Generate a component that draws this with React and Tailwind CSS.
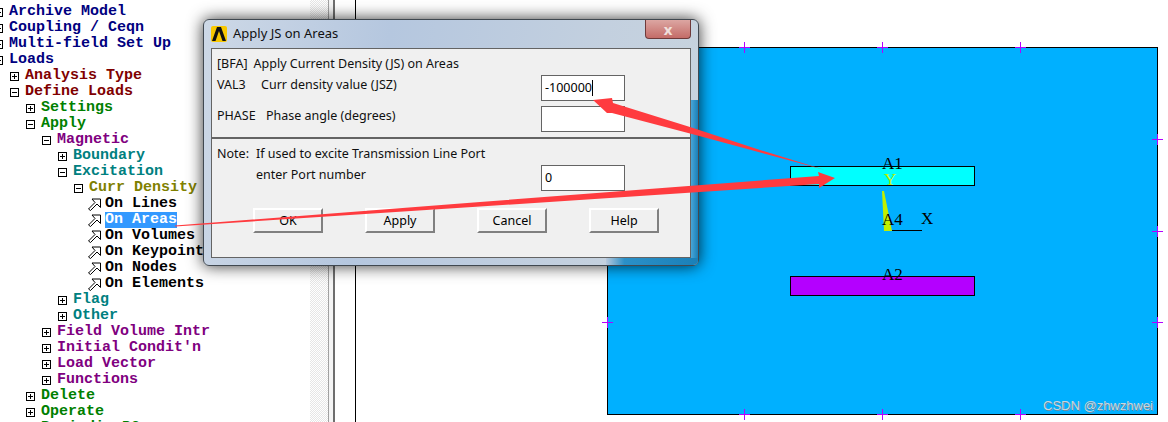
// App.jsx
import React from 'react';

const treeRows = [
  { level: 0, box: 'plus', label: 'Archive Model', color: 'text-[#000080]' },
  { level: 0, box: 'plus', label: 'Coupling / Ceqn', color: 'text-[#000080]' },
  { level: 0, box: 'plus', label: 'Multi-field Set Up', color: 'text-[#000080]' },
  { level: 0, box: 'minus', label: 'Loads', color: 'text-[#000080]' },
  { level: 1, box: 'plus', label: 'Analysis Type', color: 'text-[#800000]' },
  { level: 1, box: 'minus', label: 'Define Loads', color: 'text-[#800000]' },
  { level: 2, box: 'plus', label: 'Settings', color: 'text-[#008000]' },
  { level: 2, box: 'minus', label: 'Apply', color: 'text-[#008000]' },
  { level: 3, box: 'minus', label: 'Magnetic', color: 'text-[#800080]' },
  { level: 4, box: 'plus', label: 'Boundary', color: 'text-[#008080]' },
  { level: 4, box: 'minus', label: 'Excitation', color: 'text-[#008080]' },
  { level: 5, box: 'minus', label: 'Curr Density', color: 'text-[#808000]' },
  { level: 6, box: 'arrow', label: 'On Lines', color: 'text-black' },
  { level: 6, box: 'arrow', label: 'On Areas', color: 'text-white', selected: true },
  { level: 6, box: 'arrow', label: 'On Volumes', color: 'text-black' },
  { level: 6, box: 'arrow', label: 'On Keypoints', color: 'text-black' },
  { level: 6, box: 'arrow', label: 'On Nodes', color: 'text-black' },
  { level: 6, box: 'arrow', label: 'On Elements', color: 'text-black' },
  { level: 4, box: 'plus', label: 'Flag', color: 'text-[#008080]' },
  { level: 4, box: 'plus', label: 'Other', color: 'text-[#008080]' },
  { level: 3, box: 'plus', label: 'Field Volume Intr', color: 'text-[#800080]' },
  { level: 3, box: 'plus', label: "Initial Condit'n", color: 'text-[#800080]' },
  { level: 3, box: 'plus', label: 'Load Vector', color: 'text-[#800080]' },
  { level: 3, box: 'plus', label: 'Functions', color: 'text-[#800080]' },
  { level: 2, box: 'plus', label: 'Delete', color: 'text-[#008000]' },
  { level: 2, box: 'plus', label: 'Operate', color: 'text-[#008000]' },
  { level: 2, box: 'book', label: 'Periodic BCs', color: 'text-[#008000]' },
];

const indents = ['ml-[-6px]', 'ml-[10px]', 'ml-[26px]', 'ml-[42px]', 'ml-[58px]', 'ml-[74px]', 'ml-[88px]'];

const TreeIcon = ({ type }) => {
  if (type === 'arrow') {
    return (
      <svg width="13" height="13" viewBox="0 0 13 13" className="mr-[4px] shrink-0">
        <path d="M0.5 11 L7 4.5 L4 1 H12.5 V9.5 L9 6 L2.5 12.5 Z" fill="#fff" stroke="#000" strokeWidth="1" />
      </svg>
    );
  }
  if (type === 'book') {
    return (
      <svg width="12" height="12" viewBox="0 0 12 12" className="mr-[5px] ml-[-2px] shrink-0">
        <rect x="0.5" y="0.5" width="11" height="11" fill="#20a0a8" stroke="#000" />
        <path d="M3 3 H9 M3 5 H9" stroke="#fff" />
      </svg>
    );
  }
  return (
    <svg width="9" height="9" viewBox="0 0 9 9" className="mr-[6px] shrink-0">
      <rect x="0.5" y="0.5" width="8" height="8" fill="#fff" stroke="#000" />
      <path d="M2 4.5 H7" stroke="#000" />
      {type === 'plus' && <path d="M4.5 2 V7" stroke="#000" />}
    </svg>
  );
};

const Tree = () => (
  <div className="w-[310px] shrink-0 pt-[2px] font-['Liberation_Mono',monospace] font-bold text-[15px] leading-[16px]">
    {treeRows.map((row) => (
      <div key={row.label} className={`flex items-center h-[16px] whitespace-nowrap ${indents[row.level]}`}>
        <TreeIcon type={row.box} />
        <span className={`${row.color} ${row.selected ? 'bg-[#3399ff]' : ''}`}>{row.label}</span>
      </div>
    ))}
  </div>
);

// crosses on the model boundary, coordinates relative to the blue box
const crosses = [
  [137, 0], [275, 0], [413, 0],
  [137, 367], [275, 367], [413, 367],
  [0, 92], [0, 184], [0, 275],
  [550, 92], [550, 184], [550, 275],
];

const Cross = ({ x, y }) => (
  <div className="absolute flex items-center justify-center w-[11px] h-[11px]" style={{ left: x - 6, top: y - 6 }}>
    <div className="absolute w-[11px] h-px bg-[#b400ff]" />
    <div className="absolute w-px h-[11px] bg-[#b400ff]" />
  </div>
);

const ModelView = () => (
  <div className="flex-1 pl-[251px] pt-[47px]">
    <div className="relative w-[551px] h-[368px] border border-black bg-[#00b0ff] font-['Liberation_Serif',serif] text-[17px] leading-[17px] text-black">
      <div className="absolute left-[182px] top-[118px] w-[185px] h-[20px] border border-black bg-[#00ffff]" />
      <div className="absolute left-[182px] top-[228px] w-[185px] h-[20px] border border-black bg-[#b400ff]" />
      <svg width="50" height="50" viewBox="0 0 50 50" className="absolute left-[274px] top-[143px]">
        <polygon points="0,0 2,0 10,40 2,40" fill="#c0f000" />
        <path d="M10 39.5 H40" stroke="#000" />
      </svg>
      <span className="absolute left-[274px] top-[107px]">A1</span>
      <span className="absolute left-[276px] top-[123px] text-[#c0f000]">Y</span>
      <span className="absolute left-[274px] top-[163px]">A4</span>
      <span className="absolute left-[313px] top-[162px]">X</span>
      <span className="absolute left-[274px] top-[218px]">A2</span>
      {crosses.map(([x, y]) => <Cross key={`${x}-${y}`} x={x} y={y} />)}
      <span className="absolute right-[4px] bottom-[1px] font-['Liberation_Sans',sans-serif] text-[13px] leading-[15px] text-[#c8d6e0] [text-shadow:1px_1px_0_#6c8ea4]">
        CSDN @zhwzhwei
      </span>
    </div>
  </div>
);

const Field = ({ value, caret }) => (
  <div className="flex items-center w-[84px] h-[26px] pl-[3px] border border-[#646464] bg-white text-black">
    <span>{value}</span>
    {caret && <span className="w-px h-[16px] bg-black" />}
  </div>
);

const DialogButton = ({ children }) => (
  <div className="flex items-center justify-center w-[70px] h-[25px] bg-[#f0f0f0] border-2 border-t-[#ffffff] border-l-[#ffffff] border-r-[#808080] border-b-[#808080] text-black">
    {children}
  </div>
);

const Dialog = () => (
  <div className="absolute z-10 left-[203px] top-[19px] w-[496px] h-[247px] flex flex-col px-[7px] pb-[7px] rounded-[6px] border border-[#404850] shadow-[0_0_16px_rgba(0,0,0,0.8)] bg-[linear-gradient(100deg,#cdd8e6_0%,#b5c7df_35%,#c3d0df_75%,#c8d4de_100%)] font-['Noto_Sans',sans-serif] text-[12.5px] leading-[16px]">
    {/* blue canvas showing through the glass frame */}
    <div className="absolute right-0 top-[80px] bottom-0 w-[7px] rounded-br-[5px] bg-[linear-gradient(90deg,#49a6d8,#1a80b8)]" />
    <div className="absolute right-0 bottom-0 left-[402px] h-[7px] rounded-br-[5px] bg-[linear-gradient(90deg,#b8c8dc,#2a90c8_20%,#1a80b8)]" />
    <div className="flex h-[28px] shrink-0">
      <svg width="16" height="16" viewBox="0 0 16 16" className="mt-[6px] mr-[6px]">
        <rect width="16" height="16" rx="2" fill="#f8c800" />
        <polygon points="6,1 10,1 15,15 11.5,15 8,5 4.5,15 1,15" fill="#111" />
      </svg>
      <span className="mt-[5px] text-[13px] text-[#101010]">Apply JS on Areas</span>
      <div className="ml-auto flex items-center justify-center w-[46px] h-[19px] rounded-b-[4px] border border-[#6e3a3a] border-t-0 bg-[linear-gradient(#dca6a2,#c46c68)] text-[#f0e0dc] font-bold text-[15px] leading-none">
        x
      </div>
    </div>
    <div className="relative flex-1 flex flex-col border border-[#646464] bg-[#f0f0f0] text-[#101010]">
      <div className="flex h-[90px] border-b-2 border-[#646464]">
        <div className="pl-[5px] pt-[7px]">
          <div className="h-[16px]">[BFA]<span className="ml-[6px]">Apply Current Density (JS) on Areas</span></div>
          <div className="flex h-[16px] mt-[5px]"><span className="w-[44px]">VAL3</span>Curr density value (JSZ)</div>
          <div className="flex h-[16px] mt-[15px]"><span className="w-[49px]">PHASE</span>Phase angle (degrees)</div>
        </div>
        <div className="ml-auto mr-[65px] pt-[26px] flex flex-col gap-[5px]">
          <Field value="-100000" caret />
          <Field value="" />
        </div>
      </div>
      <div className="flex pl-[5px]">
        <div className="pt-[7px]">
          <div className="flex h-[16px]"><span className="w-[39px]">Note:</span>If used to excite Transmission Line Port</div>
          <div className="h-[16px] mt-[5px] pl-[39px]">enter Port number</div>
        </div>
        <div className="ml-auto mr-[65px] pt-[26px]">
          <Field value="0" />
        </div>
      </div>
      <div className="flex gap-[42px] pl-[41px] mt-[17px]">
        <DialogButton>OK</DialogButton>
        <DialogButton>Apply</DialogButton>
        <DialogButton>Cancel</DialogButton>
        <DialogButton>Help</DialogButton>
      </div>
    </div>
  </div>
);

// the two red annotation arrows drawn on top of the screenshot
const Arrows = () => (
  <svg width="1168" height="422" viewBox="0 0 1168 422" className="absolute z-20 left-0 top-0 pointer-events-none">
    <polygon points="175,225.5 480,202 819,176 818,172 835,178 819,188 819,184 480,206.5 175,226.5" fill="#ff3b3f" />
    <polygon points="825,170 690,133.5 612,113 607,113 593,100 612,98 613,103 690,127 760,150" fill="#ff3b3f" />
  </svg>
);

const App = () => (
  <div className="relative flex w-[1168px] h-[422px] overflow-hidden bg-white">
    <div className="pt-[2px]">
      <Tree />
    </div>
    {/* scrollbar strip between tree and graphics */}
    <div className="w-[18px] shrink-0 bg-[repeating-conic-gradient(#e6e6e6_0_25%,#ffffff_0_50%)] bg-[length:2px_2px]" />
    <div className="w-[5px] shrink-0 border-l border-[#a0a0a0] bg-[#f4f4f4]" />
    <div className="w-[2px] shrink-0 bg-[#6e6e6e]" />
    <div className="w-[20px] shrink-0" />
    <div className="w-px shrink-0 bg-black" />
    <ModelView />
    <Dialog />
    <Arrows />
  </div>
);

export default App;
